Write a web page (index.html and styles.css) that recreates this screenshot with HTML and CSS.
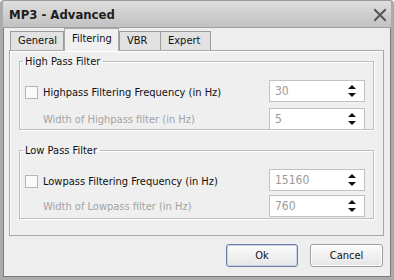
FILE: index.html
```html
<!DOCTYPE html>
<html lang="en">
<head>
  <meta charset="UTF-8" />
  <title>MP3 - Advanced</title>
  <link rel="stylesheet" href="styles.css">
</head>
<body>

  <div class="window">
    <div class="titlebar">
      <span class="title">MP3 - Advanced</span>
      <svg class="close" width="14" height="14" viewBox="0 0 14 14">
        <path d="M2 2 L12 12 M12 2 L2 12" stroke="#555555" stroke-width="2" stroke-linecap="square" />
      </svg>
    </div>

    <div class="content">
      <div class="tabs">
        <div class="tab">General</div>
        <div class="tab active">Filtering</div>
        <div class="tab">VBR</div>
        <div class="tab">Expert</div>
      </div>

      <div class="panel">
        <fieldset class="group high">
          <legend>High Pass Filter</legend>
          <div class="row">
            <label class="check"><span class="box"></span>Highpass Filtering Frequency (in Hz)</label>
            <div class="spin"><span class="val">30</span><span class="arrows"><i class="up"></i><i class="down"></i></span></div>
          </div>
          <div class="row">
            <span class="sub">Width of Highpass filter (in Hz)</span>
            <div class="spin"><span class="val">5</span><span class="arrows"><i class="up"></i><i class="down"></i></span></div>
          </div>
        </fieldset>

        <fieldset class="group low">
          <legend>Low Pass Filter</legend>
          <div class="row">
            <label class="check"><span class="box"></span>Lowpass Filtering Frequency (in Hz)</label>
            <div class="spin"><span class="val">15160</span><span class="arrows"><i class="up"></i><i class="down"></i></span></div>
          </div>
          <div class="row">
            <span class="sub">Width of Lowpass filter (in Hz)</span>
            <div class="spin"><span class="val">760</span><span class="arrows"><i class="up"></i><i class="down"></i></span></div>
          </div>
        </fieldset>
      </div>

      <div class="buttons">
        <button class="btn default">Ok</button>
        <button class="btn">Cancel</button>
      </div>
    </div>
  </div>

</body>
</html>
```

FILE: styles.css
```css
html, body {
  margin: 0;
  padding: 0;
  background: #ffffff;
}

body {
  font-family: Tahoma, "DejaVu Sans Condensed", "Liberation Sans", sans-serif;
  font-size: 11px;
  color: #000;
}

.window {
  width: 394px;
  height: 280px;
  box-sizing: border-box;
  background: #eeeeee;
  border: 3px solid #ababab;
  border-top: 1px solid #9a9a9a;
  box-shadow: inset 0 0 0 1px #7a7a7a;
  border-radius: 4px 4px 0 0;
  display: flex;
  flex-direction: column;
  overflow: hidden;
}

.titlebar {
  height: 27px;
  flex: none;
  display: flex;
  align-items: center;
  justify-content: space-between;
  padding: 1px 4px 0 6px;
  box-sizing: border-box;
  background: linear-gradient(#e0e0e0, #cdcdcd 55%, #c2c2c2);
  border-bottom: 1px solid #a0a0a0;
}

.title {
  font-size: 13px;
  font-weight: bold;
  color: #1e1e1e;
}

.close {
  display: block;
}

.content {
  flex: 1;
  padding: 2px 7px 0 6px;
  display: flex;
  flex-direction: column;
}

.tabs {
  display: flex;
  align-items: flex-end;
  height: 20px;
  padding-left: 1px;
  position: relative;
  z-index: 1;
}

.tab {
  height: 18px;
  line-height: 18px;
  padding: 0 5px 0 7px;
  background: #e2e2e2;
  border: 1px solid #9c9c9c;
  border-bottom: none;
  margin-right: -1px;
  color: #111;
}

.tab:nth-child(1) { width: 40px; }
.tab:nth-child(3) { width: 28px; }
.tab:nth-child(4) { width: 37px; }

.tab.active {
  height: 22px;
  line-height: 20px;
  width: 41px;
  background: #f0f0f0;
  border-color: #a8a8a8;
  margin: 0 0 -1px 1px;
  position: relative;
  z-index: 2;
}

.panel {
  height: 186px;
  box-sizing: border-box;
  border: 1px solid #a8a8a8;
  box-shadow: inset 1px 1px 0 #ffffff;
  padding: 4px 9px 0 9px;
  background: #efefef;
}

.group {
  margin: 0;
  height: 75px;
  box-sizing: border-box;
  border: 1px solid #bdbdbd;
  box-shadow: 1px 1px 0 #ffffff, inset 1px 1px 0 #ffffff;
  padding: 12px 8px 0 3px;
}

.group.low {
  margin-top: 14px;
}

.group legend {
  padding: 0 3px 0 2px;
  color: #111;
}

.row {
  display: flex;
  align-items: center;
  justify-content: space-between;
  height: 22px;
}

.high .row + .row { margin-top: 6px; }
.low .row + .row { margin-top: 4px; }

.check {
  display: flex;
  align-items: center;
  color: #111;
  padding-top: 2px;
}

.box {
  width: 11px;
  height: 11px;
  border: 1px solid #b6b6b6;
  background: #fafafa;
  margin: 0 5px 0 2px;
}

.sub {
  color: #a3a3a3;
  margin-left: 20px;
}

.spin {
  width: 96px;
  height: 22px;
  box-sizing: border-box;
  border: 1px solid #c2c2c2;
  background: #ffffff;
  display: flex;
  align-items: center;
  justify-content: space-between;
  padding: 0 8px 0 5px;
}

.val {
  color: #9a9a9a;
  font-size: 12px;
}

.arrows {
  display: flex;
  flex-direction: column;
  gap: 4px;
}

.arrows i {
  width: 0;
  height: 0;
  border-left: 4px solid transparent;
  border-right: 4px solid transparent;
}

.arrows .up { border-bottom: 4px solid #111; }
.arrows .down { border-top: 4px solid #111; }

.buttons {
  display: flex;
  justify-content: flex-end;
  gap: 12px;
  padding: 8px 1px 0 0;
}

.btn {
  height: 23px;
  width: 73px;
  font-family: inherit;
  font-size: 11px;
  color: #111;
  background: linear-gradient(#fbfbfb, #e6e6e6);
  border: 1px solid #9e9e9e;
  border-radius: 3px;
  box-shadow: inset 0 0 0 1px #ffffff;
  padding: 0;
}

.btn.default {
  width: 72px;
  border-color: #6d7fa5;
  box-shadow: inset 0 0 0 1px #c6d2ea;
}
```
